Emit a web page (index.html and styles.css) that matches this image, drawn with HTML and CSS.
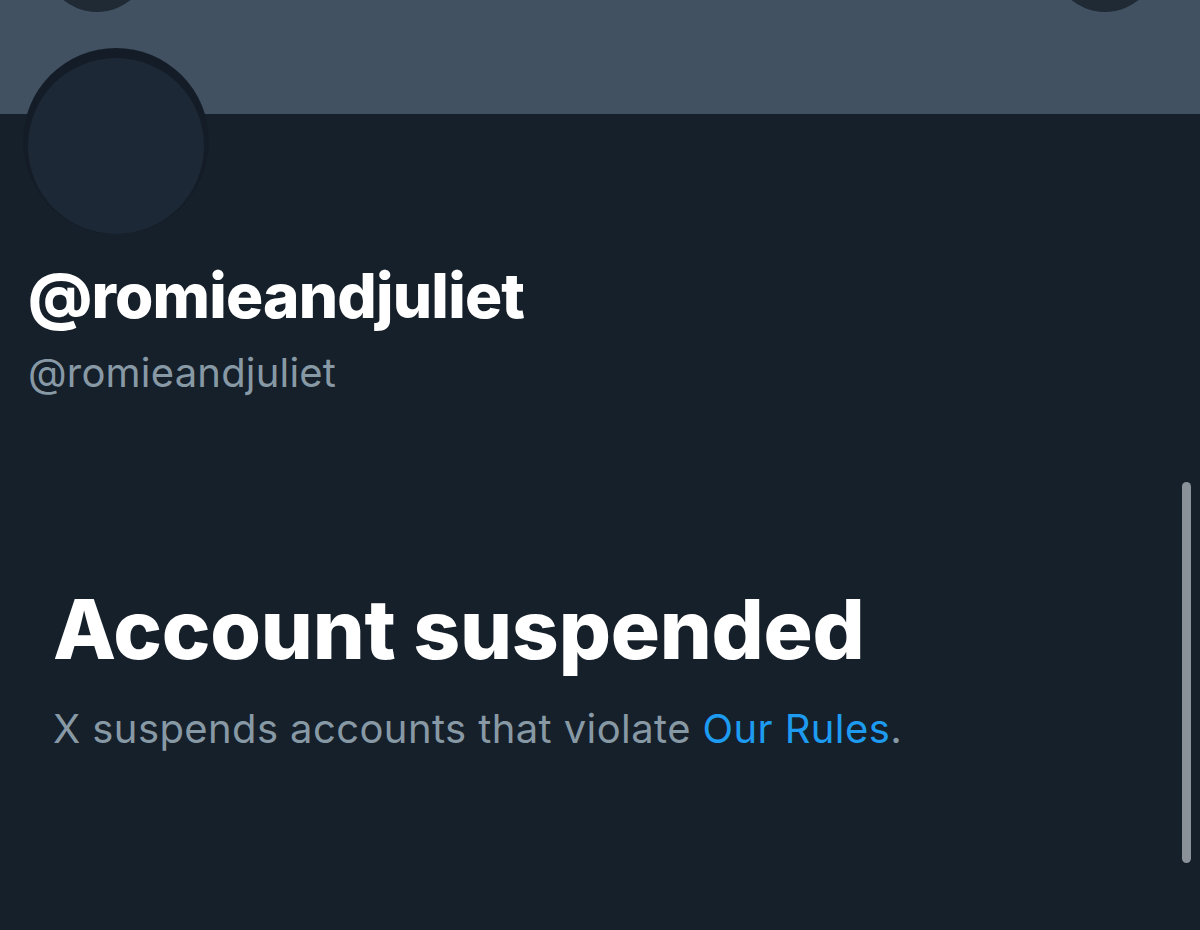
FILE: index.html
```html
<!DOCTYPE html>
<html lang="en">
<head>
<meta charset="utf-8">
<title>@romieandjuliet</title>
<link rel="stylesheet" href="styles.css">
</head>
<body>
<div class="screen">
  <header class="banner">
    <span class="nav-btn nav-left"></span>
    <span class="nav-btn nav-right"></span>
  </header>
  <section class="profile">
    <div class="avatar"><div class="avatar-inner"></div></div>
    <h1 class="name">@romieandjuliet</h1>
    <div class="handle">@romieandjuliet</div>
  </section>
  <section class="suspended">
    <h2 class="title">Account suspended</h2>
    <p class="desc">X suspends accounts that violate <a class="link" href="#">Our Rules</a>.</p>
  </section>
  <div class="scrollbar"></div>
</div>
</body>
</html>
```
FILE: styles.css
```css
html, body {
  margin: 0;
  padding: 0;
  background: #16202a;
}
.screen {
  position: relative;
  width: 1200px;
  height: 930px;
  overflow: hidden;
  background: #16202a;
  font-family: Inter, "Noto Sans", "Liberation Sans", sans-serif;
}
.banner {
  position: relative;
  height: 114px;
  background: #415162;
}
.nav-btn {
  position: absolute;
  top: -94px;
  width: 106px;
  height: 106px;
  border-radius: 50%;
  background: #1f2a35;
}
.nav-left { left: 44px; }
.nav-right { left: 1052px; }
.profile {
  padding-left: 28px;
}
.avatar {
  position: relative;
  z-index: 1;
  margin-top: -66px;
  margin-left: -5px;
  width: 186px;
  height: 186px;
  border-radius: 50%;
  background: #141d27;
  display: flex;
  justify-content: center;
  align-items: flex-end;
}
.avatar-inner {
  width: 176px;
  height: 176px;
  border-radius: 50%;
  background: #1c2836;
}
.name {
  margin: 25px 0 0;
  font-size: 62px;
  line-height: 74px;
  font-weight: 800;
  color: #ffffff;
  letter-spacing: -0.8px;
}
.handle {
  margin-top: 16px;
  font-size: 40px;
  line-height: 48px;
  font-weight: 400;
  color: #8899a6;
  letter-spacing: 0.2px;
}
.suspended {
  padding-left: 53px;
  margin-top: 184px;
}
.title {
  margin: 0;
  font-size: 82px;
  line-height: 98px;
  font-weight: 800;
  color: #ffffff;
  letter-spacing: -0.25px;
}
.desc {
  margin: 26px 0 0;
  font-size: 40px;
  line-height: 48px;
  color: #8899a6;
  letter-spacing: 0.4px;
}
.link {
  color: #1d9bf0;
  text-decoration: none;
}
.scrollbar {
  position: absolute;
  left: 1182px;
  top: 482px;
  width: 9px;
  height: 381px;
  border-radius: 5px;
  background: #8a9199;
}
```
